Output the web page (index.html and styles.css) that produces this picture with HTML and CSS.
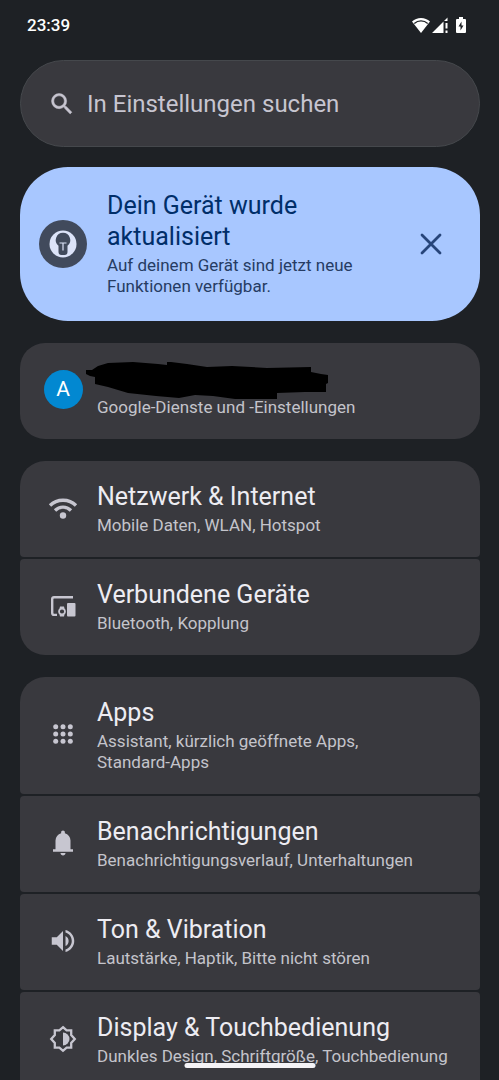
FILE: index.html
```html
<!DOCTYPE html>
<html lang="de">
<head>
<meta charset="utf-8">
<meta name="viewport" content="width=device-width, initial-scale=1">
<title>Einstellungen</title>
<link rel="stylesheet" href="styles.css">
</head>
<body>
<div class="screen">
  <header class="status-bar">
    <time class="clock">23:39</time>
    <div class="status-icons">
      <svg class="status-wifi" width="18" height="15" viewBox="0 0 18 15" aria-hidden="true"><path fill="#fff" d="M9 0C5.500 0 2.500 1.300 0 3.500L9 15l9-11.500C15.500 1.300 12.500 0 9 0z"/><path fill="none" stroke="#1e2125" stroke-width="1.300" d="M2.300 5.500C6 2.100 12 2.100 15.700 5.500"/></svg>
      <svg class="status-signal" width="16" height="16" viewBox="0 0 16 16" aria-hidden="true"><path fill="#fff" d="M0 16 11.500 4.500V16zM12 4 15.500.500V4zM13.500 6h2v5.500h-2zM13.500 13.500h2V16h-2z"/></svg>
      <svg class="status-battery" width="10" height="16" viewBox="0 0 10 16" aria-hidden="true"><path fill="#fff" d="M3 0h4v2h2q1 0 1 1v12q0 1-1 1H1q-1 0-1-1V3q0-1 1-1h2z"/><path fill="#1e2125" d="M5.500 4.500 2.500 9.500h2v4l3-5h-2z"/></svg>
    </div>
  </header>
  <main class="content">
    <label class="search">
      <svg class="search-icon" width="28" height="28" viewBox="0 0 24 24" aria-hidden="true"><path fill="currentColor" stroke="currentColor" stroke-width=".4" d="M15.500 14h-.790l-.280-.270A6.471 6.471 0 0 0 16 9.500 6.500 6.500 0 1 0 9.500 16c1.610 0 3.090-.590 4.230-1.570l.270.280v.790l5 4.990L20.490 19l-4.990-5zm-6 0C7.010 14 5 11.990 5 9.500S7.010 5 9.500 5 14 7.010 14 9.500 11.990 14 9.500 14z"/></svg>
      <input class="search-input" type="search" placeholder="In Einstellungen suchen" aria-label="In Einstellungen suchen">
    </label>

    <section class="banner">
      <svg class="banner-icon" width="48" height="48" viewBox="0 0 48 48" aria-hidden="true"><circle cx="24" cy="24" r="24" fill="#414a5c"/><circle cx="24" cy="24" r="13.500" fill="#dce3f8"/><path fill="#414a5c" d="M24 12.800a7.300 7.300 0 0 0-4.500 13V32q0 3 3 3h3q3 0 3-3v-6.200A7.300 7.300 0 0 0 24 12.800z"/><path fill="none" stroke="#dce3f8" stroke-width="1.200" d="M20.500 23h7M24 23v7.500"/></svg>
      <div class="text">
        <h2 class="title">Dein Gerät wurde aktualisiert</h2>
        <p class="summary">Auf deinem Gerät sind jetzt neue Funktionen verfügbar.</p>
      </div>
      <button class="dismiss" type="button" aria-label="Schließen"><svg width="22" height="22" viewBox="0 0 22 22" aria-hidden="true"><path fill="none" stroke="#27457a" stroke-width="2.800" stroke-linecap="round" d="m2 2 18 18M20 2 2 20"/></svg></button>
    </section>

    <section class="group">
      <a class="item" href="#konto">
        <span class="icon"><span class="avatar">A</span></span>
        <span class="text">
          <span class="title redacted"><svg class="scribble" width="244" height="38" viewBox="0 0 244 38" aria-hidden="true"><path d="M1 9h6l6-4 10-3 25-1 25 2 9 1V1h4l16 2 20 3 25-1 35 2 44-1v5l10 2 7 1v8l-2 1v8h-21l-28 1v6l-14 1-28-1-22-3-18-1-16 3-23-2-28-3-20-6-13-3V16l-5-1-4-2z"/></svg></span>
          <span class="summary">Google-Dienste und -Einstellungen</span>
        </span>
      </a>
    </section>

    <nav class="group">
      <a class="item" href="#netzwerk">
        <span class="icon"><svg width="30" height="30" viewBox="0 0 30 30" aria-hidden="true"><g fill="none" stroke="currentColor" stroke-width="3.300"><path d="M2 12.500C9 5.500 21 5.500 28 12.500"/><path d="M7 17.500c4.500-4.500 11.500-4.500 16 0"/></g><circle cx="15" cy="22.500" r="3.200" fill="currentColor"/></svg></span>
        <span class="text"><span class="title">Netzwerk &amp; Internet</span><span class="summary">Mobile Daten, WLAN, Hotspot</span></span>
      </a>
      <a class="item" href="#geraete">
        <span class="icon"><svg width="30" height="30" viewBox="0 0 30 30" aria-hidden="true"><path fill="none" stroke="currentColor" stroke-width="2.400" d="M25 6.200H6Q4.200 6.200 4.200 8v14q0 1.900 1.800 1.900h3"/><rect x="19" y="12" width="8.500" height="13.500" rx="1" fill="currentColor"/><path fill="currentColor" fill-rule="evenodd" d="M12 15.500h4l.5 2a4 4 0 0 1 0 6l-.5 2h-4l-.5-2a4 4 0 0 1 0-6zM14 18.400a2.100 2.100 0 1 0 0 4.200 2.100 2.100 0 0 0 0-4.200z"/></svg></span>
        <span class="text"><span class="title">Verbundene Geräte</span><span class="summary">Bluetooth, Kopplung</span></span>
      </a>
    </nav>

    <nav class="group continued">
      <a class="item" href="#apps">
        <span class="icon"><svg width="30" height="30" viewBox="0 0 30 30" aria-hidden="true"><g fill="currentColor"><circle cx="7.700" cy="7.700" r="2.500"/><circle cx="15" cy="7.700" r="2.500"/><circle cx="22.300" cy="7.700" r="2.500"/><circle cx="7.700" cy="15" r="2.500"/><circle cx="15" cy="15" r="2.500"/><circle cx="22.300" cy="15" r="2.500"/><circle cx="7.700" cy="22.300" r="2.500"/><circle cx="15" cy="22.300" r="2.500"/><circle cx="22.300" cy="22.300" r="2.500"/></g></svg></span>
        <span class="text"><span class="title">Apps</span><span class="summary">Assistant, kürzlich geöffnete Apps,<br>Standard-Apps</span></span>
      </a>
      <a class="item" href="#benachrichtigungen">
        <span class="icon"><svg width="30" height="30" viewBox="0 0 24 24" aria-hidden="true"><path fill="currentColor" d="M4 19v-2h2v-7q0-2.075 1.250-3.687T10.500 4.200v-.7q0-.625.438-1.062T12 2t1.063.438T13.500 3.500v.7q2 .5 3.250 2.113T18 10v7h2v2zm8 3q-.825 0-1.412-.587T10 20h4q0 .825-.587 1.413T12 22"/></svg></span>
        <span class="text"><span class="title">Benachrichtigungen</span><span class="summary">Benachrichtigungsverlauf, Unterhaltungen</span></span>
      </a>
      <a class="item" href="#ton">
        <span class="icon"><svg width="30" height="30" viewBox="0 0 24 24" aria-hidden="true"><path fill="currentColor" d="M3 9v6h4l5 5V4L7 9zm13.500 3A4.500 4.500 0 0 0 14 7.970v8.050A4.470 4.470 0 0 0 16.500 12zM14 3.230v2.060c2.890.860 5 3.540 5 6.710s-2.110 5.850-5 6.710v2.060c4.010-.910 7-4.490 7-8.770s-2.990-7.860-7-8.770z"/></svg></span>
        <span class="text"><span class="title">Ton &amp; Vibration</span><span class="summary">Lautstärke, Haptik, Bitte nicht stören</span></span>
      </a>
      <a class="item" href="#display">
        <span class="icon"><svg width="30" height="30" viewBox="0 0 30 30" aria-hidden="true"><path fill="none" stroke="currentColor" stroke-width="2.300" d="m15 3.200 3.600 3.200h4.600v4.600L26.800 15l-3.600 4v4.600h-4.600L15 26.800l-3.600-3.200H6.800V19l-3.600-4 3.600-4V6.400h4.600z"/><path fill="currentColor" d="M15 8.500a6.500 6.500 0 0 1 0 13z"/></svg></span>
        <span class="text"><span class="title">Display &amp; Touchbedienung</span><span class="summary">Dunkles Design, Schriftgröße, Touchbedienung</span></span>
      </a>
    </nav>
  </main>
  <div class="home-indicator"></div>
</div>
</body>
</html>
```

FILE: styles.css
```css
* {
  box-sizing: border-box;
}

body {
  margin: 0;
  background: #1e2125;
  color: #edecf2;
  font-family: Roboto, "Noto Sans", sans-serif;
}

.screen {
  height: 100vh;
  overflow: hidden;
}

.status-bar {
  display: flex;
  justify-content: space-between;
  align-items: center;
  height: 50px;
  padding: 0 33px 0 27px;
}

.clock {
  color: #fff;
  font-size: 17px;
  font-weight: 500;
}

.status-icons {
  display: flex;
  align-items: center;
}

.status-signal {
  margin: 0 8px 0 2px;
}

.content {
  display: flex;
  flex-direction: column;
  gap: 22px;
  padding: 10px 19px 0 20px;
}

.search {
  display: flex;
  align-items: center;
  gap: 11px;
  height: 87px;
  margin-bottom: -2px;
  padding: 0 27px;
  border: 1px solid #45484c;
  border-radius: 44px;
  background: #39393e;
  color: #c7c5d0;
}

.search-icon {
  flex: none;
}

.search-input {
  flex: 1;
  min-width: 0;
  padding: 0;
  border: 0;
  outline: 0;
  background: none;
  color: inherit;
  font: inherit;
  font-size: 24px;
}

.search-input::placeholder {
  color: #c7c5d0;
  opacity: 1;
}

.banner {
  display: flex;
  align-items: center;
  gap: 20px;
  padding: 23px 38px 24px 19px;
  border-radius: 48px;
  background: #a8c7ff;
  color: #002e69;
}

.banner-icon {
  flex: none;
}

.banner .summary {
  color: #263c63;
}

.dismiss {
  display: flex;
  margin: 0;
  padding: 0;
  border: 0;
  background: none;
}

.group {
  display: flex;
  flex-direction: column;
  gap: 2px;
  border-radius: 25px;
  overflow: hidden;
}

.continued {
  border-radius: 25px 25px 0 0;
}

.item {
  display: flex;
  align-items: center;
  gap: 14px;
  padding: 20px 16px 21px 23px;
  border-radius: 4px;
  background: #39393e;
  color: inherit;
  text-decoration: none;
}

.icon {
  display: flex;
  flex: none;
  justify-content: center;
  width: 40px;
  padding-bottom: 2px;
  color: #c7c6d0;
}

.avatar {
  width: 39px;
  height: 39px;
  border-radius: 50%;
  background: #0288d1;
  color: #fff;
  font-size: 21px;
  line-height: 39px;
  text-align: center;
}

.text {
  display: flex;
  flex: 1;
  flex-direction: column;
  gap: 3px;
  min-width: 0;
}

.title {
  margin: 0;
  font-size: 25px;
  font-weight: 400;
  line-height: 31px;
}

.summary {
  margin: 0;
  color: #c4c4cb;
  font-size: 17px;
  line-height: 21px;
}

.redacted {
  position: relative;
  height: 31px;
}

/* The stroke runs over the edges of the title line. */
.scribble {
  position: absolute;
  top: -2px;
  left: -12px;
}

.home-indicator {
  position: fixed;
  bottom: 12px;
  left: 50%;
  width: 131px;
  height: 5px;
  border-radius: 3px;
  background: #f4f3f6;
  transform: translateX(-50%);
}
```
